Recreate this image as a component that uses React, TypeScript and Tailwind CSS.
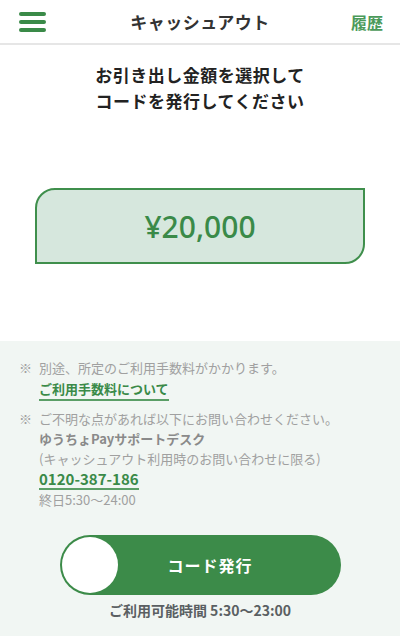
import React from "react";

export default function App() {
  const font = { fontFamily: '"Noto Sans CJK JP", "Noto Sans", sans-serif' };
  return (
    <div className="w-[400px] h-[636px] bg-white flex flex-col overflow-hidden" style={font}>
      {/* Header */}
      <div className="h-[45px] shrink-0 flex items-center justify-between px-[19px] border-b-2 border-[#e6e6e6] relative">
        <div className="flex flex-col gap-[4px] w-[27px]">
          <div className="h-[4px] rounded-[2px] bg-[#3a8a48]" />
          <div className="h-[4px] rounded-[2px] bg-[#3a8a48]" />
          <div className="h-[4px] rounded-[2px] bg-[#3a8a48]" />
        </div>
        <div className="absolute left-0 right-0 text-center text-[17px] font-bold text-[#333] tracking-[0.5px] pointer-events-none">
          キャッシュアウト
        </div>
        <div className="text-[16px] font-bold text-[#4b9a5a] mr-[-2px]">履歴</div>
      </div>

      {/* Title */}
      <div className="pt-[17px] text-center text-[17px] font-bold text-[#222] leading-[26px] tracking-[0.5px]">
        <div>お引き出し金額を選択して</div>
        <div>コードを発行してください</div>
      </div>

      {/* Amount box */}
      <div className="flex justify-center pt-[74px]">
        <div className="w-[330px] h-[76px] bg-[#d6e7dd] border-2 border-[#3f8f4c] rounded-tl-[20px] rounded-br-[20px] flex items-center justify-center">
          <span className="text-[30px] font-medium text-[#3a8a48]" style={{ fontFamily: '"Noto Sans", "Noto Sans CJK JP", sans-serif' }}>
            ¥20,000
          </span>
        </div>
      </div>

      {/* Lower section */}
      <div className="mt-[77px] flex-1 bg-[#f1f6f3] flex flex-col">
        <div className="pt-[17px] pl-[19px] text-[13px] text-[#a0a0a0] leading-[20px]">
          <div className="flex">
            <span className="w-[20px] shrink-0">※</span>
            <div>
              <div>別途、所定のご利用手数料がかかります。</div>
              <div className="mt-[1px]">
                <span className="font-bold text-[#3a8a48] border-b-2 border-[#5a9e66] pb-[1px]">ご利用手数料について</span>
              </div>
            </div>
          </div>
          <div className="flex mt-[10px]">
            <span className="w-[20px] shrink-0">※</span>
            <div>
              <div>ご不明な点があれば以下にお問い合わせください。</div>
              <div className="font-bold text-[#8a8a8a]">ゆうちょPayサポートデスク</div>
              <div>(キャッシュアウト利用時のお問い合わせに限る)</div>
              <div className="mt-[1px]">
                <span className="font-bold text-[#3a8a48] text-[15px] border-b-2 border-[#5a9e66] leading-[18px] inline-block">0120-387-186</span>
              </div>
              <div>終日5:30〜24:00</div>
            </div>
          </div>
        </div>

        <div className="flex justify-center mt-[25px]">
          <div className="w-[281px] h-[60px] rounded-full bg-[#3c8b49] relative flex items-center justify-center">
            <div className="absolute left-[2px] top-[2px] w-[56px] h-[56px] rounded-full bg-white" />
            <span className="text-white font-bold text-[16px] tracking-[1px] ml-[20px]">コード発行</span>
          </div>
        </div>
        <div className="text-center mt-[5px] text-[14px] font-bold text-[#5a5f62]">
          ご利用可能時間 5:30〜23:00
        </div>
      </div>
    </div>
  );
}
